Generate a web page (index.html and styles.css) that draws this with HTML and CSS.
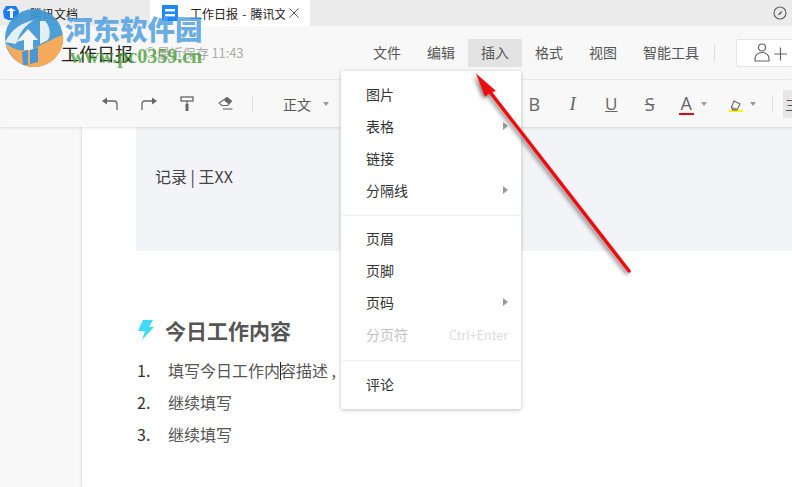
FILE: index.html
```html
<!DOCTYPE html>
<html lang="zh-CN">
<head>
    <meta charset="UTF-8">
    <title>工作日报 - 腾讯文档</title>
    <link rel="stylesheet" href="styles.css">
</head>
<body>
    <div class="tabs">
        <div class="tab">
            <svg class="tab-logo" width="16" height="14" viewBox="0 0 16 14"><path d="M3 0h10l3 5-1 7-4 2H5l-4-2-1-7z" fill="#1e7cf2"/><path d="M3 5l5-3 5 3h-3v7H7V5z" fill="#fff"/></svg>
            <span>腾讯文档</span>
        </div>
        <div class="tab tab-active">
            <svg class="tab-icon" width="16" height="16" viewBox="0 0 16 16"><rect width="16" height="16" rx="1" fill="#1e88f5"/><rect x="3" y="4" width="10" height="2.4" fill="#fff"/><rect x="3" y="9" width="10" height="2.4" fill="#fff"/></svg>
            <span class="tab-title">工作日报 - 腾讯文档</span>
            <svg class="tab-close" width="10" height="10" viewBox="0 0 10 10"><path d="M0.5 0.5l9 9M9.5 0.5l-9 9" stroke="#555" fill="none"/></svg>
        </div>
        <svg class="compass" width="14" height="14" viewBox="0 0 14 14"><circle cx="7" cy="7" r="6" stroke="#666" stroke-width="1.2" fill="none"/><path d="M9.5 4.5L6 7l-1.500 2.500L8 8z" fill="#666"/></svg>
    </div>

    <div class="header">
        <div class="doc-title">工作日报</div>
        <div class="save-state">
            <svg width="11" height="11" viewBox="0 0 11 11"><circle cx="5.500" cy="5.500" r="5" stroke="#aaa" fill="none"/></svg>
            最近保存 11:43
        </div>
        <nav class="menu-bar">
            <span class="menu-item">文件</span>
            <span class="menu-item">编辑</span>
            <span class="menu-item menu-item-open">插入</span>
            <span class="menu-item">格式</span>
            <span class="menu-item">视图</span>
            <span class="menu-item">智能工具</span>
        </nav>
        <div class="header-sep"></div>
        <div class="share">
            <svg width="38" height="22" viewBox="0 0 38 22"><circle cx="10" cy="5.500" r="3.500" stroke="#666" stroke-width="1.200" fill="none"/><path d="M3 19v-2.500c0-3 2.500-6 7-6s7 3 7 6V19z" stroke="#666" stroke-width="1.200" fill="none"/><path d="M22 12h13M28.500 5.500v13" stroke="#666" stroke-width="1.200" fill="none"/></svg>
        </div>
    </div>

    <div class="toolbar">
        <div class="tool">
            <svg width="16" height="14" viewBox="0 0 16 14"><path d="M0 4l5-3.500v7z" fill="#666"/><path d="M4 4h8a3 3 0 0 1 3 3v6" stroke="#666" stroke-width="1.300" fill="none"/></svg>
        </div>
        <div class="tool">
            <svg width="16" height="14" viewBox="0 0 16 14"><path d="M16 4l-5-3.500v7z" fill="#666"/><path d="M12 4H4a3 3 0 0 0-3 3v6" stroke="#666" stroke-width="1.300" fill="none"/></svg>
        </div>
        <div class="tool">
            <svg width="14" height="15" viewBox="0 0 14 15"><rect x="1" y="1" width="12" height="4" stroke="#666" stroke-width="1.300" fill="none"/><path d="M7 5v3" stroke="#666" stroke-width="1.300"/><rect x="5.500" y="8" width="3" height="7" fill="#666"/></svg>
        </div>
        <div class="tool">
            <svg width="15" height="13" viewBox="0 0 15 13"><path d="M9 0.500l4.500 3.500-4 4.500H4L1 6z" fill="#fff" stroke="#666" stroke-width="1.100"/><path d="M9 0.500l4.500 3.500-2.800 3.200-4.700-3.700z" fill="#666"/><path d="M5 12h9.500" stroke="#666" stroke-width="1.100"/></svg>
        </div>
        <div class="tool-sep"></div>
        <div class="style-select">正文<span class="caret"></span></div>

        <div class="format-group">
            <div class="tool tool-b">B</div>
            <div class="tool tool-i">I</div>
            <div class="tool tool-u">U</div>
            <div class="tool tool-s">S</div>
            <div class="tool tool-color">
                <span class="color-a">A</span><span class="caret"></span>
            </div>
            <div class="tool tool-color tool-mark">
                <span class="color-mark">
                    <svg width="14" height="14" viewBox="0 0 14 14"><path d="M5 1l6 3-3 6H3.500L2.500 7z" stroke="#666" stroke-width="1.100" fill="none"/><path d="M3 7l6 2-1 1H3.500z" fill="#888"/></svg>
                </span><span class="caret"></span>
            </div>
            <div class="tool-sep tool-sep-right"></div>
            <div class="tool-box">三</div>
        </div>
    </div>

    <div class="workspace">
        <div class="page">
            <div class="banner">记录 | 王XX</div>
            <h2 class="section-title">
                <svg width="16" height="20" viewBox="0 0 16 20"><path d="M5 0h10l-4 7h5L4 20l3-9H0z" fill="#3fdcf7"/></svg>
                今日工作内容
            </h2>
            <ol class="work-list">
                <li><span class="num">1.</span><span>填写今日工作内<i class="text-cursor"></i>容描述 ,</span></li>
                <li><span class="num">2.</span><span>继续填写</span></li>
                <li><span class="num">3.</span><span>继续填写</span></li>
            </ol>
        </div>
    </div>

    <div class="dropdown">
        <div class="dropdown-group">
            <div class="dropdown-item">图片</div>
            <div class="dropdown-item has-sub">表格</div>
            <div class="dropdown-item">链接</div>
            <div class="dropdown-item has-sub">分隔线</div>
        </div>
        <div class="dropdown-group dropdown-group-page">
            <div class="dropdown-item">页眉</div>
            <div class="dropdown-item">页脚</div>
            <div class="dropdown-item has-sub">页码</div>
            <div class="dropdown-item disabled">分页符<span class="shortcut">Ctrl+Enter</span></div>
        </div>
        <div class="dropdown-group">
            <div class="dropdown-item">评论</div>
        </div>
    </div>

    <!-- red arrow drawn on top of the screenshot -->
    <svg class="red-arrow" width="792" height="487" viewBox="0 0 792 487">
        <defs>
            <filter id="arrow-shadow" x="-20%" y="-20%" width="140%" height="140%">
                <feDropShadow dx="-2" dy="2" stdDeviation="2" flood-color="#000" flood-opacity="0.5"/>
            </filter>
        </defs>
        <g filter="url(#arrow-shadow)">
            <path d="M629 271L490 92" stroke="#ee0f0f" stroke-width="3.500" stroke-linecap="round"/>
            <path d="M476 73.500L496 91 490.500 92.500 485 97z" fill="#ee0f0f"/>
        </g>
    </svg>

    <!-- site watermark -->
    <div class="watermark">
        <svg class="wm-logo" width="60" height="58" viewBox="0 0 60 58">
            <circle cx="30" cy="29" r="29" fill="#3f97d4" opacity="0.92"/>
            <path d="M2 34c8 8 18 9 28 5 10-4 19-10 29-13 2 17-11 32-29 32C15 58 5 47 2 34z" fill="#f6ab5c"/>
            <path d="M1 33C8 20 17 14 30 11c-10 6-15 14-18 24z" fill="#f4f6f8" opacity="0.9"/>
            <path d="M12 33l12-13 10 11h-5v10h-9V31z" fill="#f4f6f8"/>
            <path d="M36 12h5c5 5 6 13 3 19l-8 4z" fill="#f4f6f8" opacity="0.9"/>
            <path d="M18 43l6-2v15h-5zM26 41l8-3v15l-8 2z" fill="#2e90e8" opacity="0.85"/>
        </svg>
        <div class="wm-name">河东软件园</div>
        <div class="wm-url">www.pc0359.cn</div>
    </div>
</body>
</html>
```

FILE: styles.css
```css
* {
    box-sizing: border-box;
}
html, body {
    height: 100%;
}
body {
    margin: 0;
    display: flex;
    flex-direction: column;
    overflow: hidden;
    font-family: "Noto Sans CJK SC", sans-serif;
    color: #333;
    background: #f8f8f9;
}

/* window tabs */
.tabs {
    height: 26px;
    flex: none;
    display: flex;
    align-items: center;
    background: #ebebeb;
    font-size: 12px;
    color: #222;
}
.tab {
    width: 150px;
    height: 26px;
    padding-left: 3px;
    display: flex;
    align-items: center;
}
.tab-logo {
    margin-right: 11px;
}
.tab-active {
    width: 160px;
    padding-left: 12px;
    background: #fff;
}
.tab-icon {
    margin-right: 12px;
}
.tab-title {
    width: 95px;
    flex: none;
    overflow: hidden;
    white-space: nowrap;
    word-spacing: 1.500px;
}
.tab-close {
    margin-left: 4px;
}
.compass {
    margin-left: auto;
    margin-right: 5px;
}

/* title + menu row */
.header {
    height: 54px;
    flex: none;
    display: flex;
    align-items: center;
    padding-left: 61px;
    background: #f8f8f8;
    border-bottom: 1px solid #ececec;
}
.doc-title {
    width: 84px;
    flex: none;
    font-size: 18px;
    color: #222;
}
.save-state {
    width: 215px;
    flex: none;
    display: flex;
    align-items: center;
    gap: 1px;
    font-size: 13px;
    letter-spacing: -0.100px;
    color: #aaa;
}
.menu-bar {
    flex: none;
    display: flex;
}
.menu-item {
    height: 28px;
    padding: 0 13px;
    font-size: 14px;
    line-height: 27px;
    white-space: nowrap;
    color: #555;
}
.menu-item-open {
    background: #e3e3e3;
}
.header-sep {
    width: 1px;
    height: 18px;
    flex: none;
    margin: 0 21px 0 2px;
    background: #e0e0e0;
}
.share {
    width: 80px;
    height: 28px;
    flex: none;
    padding: 2px 0 0 15px;
    background: #fff;
    border: 1px solid #e4e4e4;
    border-radius: 2px;
}

/* format toolbar */
.toolbar {
    height: 47px;
    flex: none;
    display: flex;
    align-items: center;
    padding-left: 91px;
    background: #f8f8f8;
    box-shadow: 0 1px 3px rgba(0, 0, 0, 0.12);
    position: relative;
    z-index: 1;
}
.tool {
    width: 38.5px;
    flex: none;
    display: flex;
    justify-content: center;
    align-items: center;
    color: #666;
    font-size: 16px;
}
.tool-sep {
    width: 1px;
    height: 14px;
    flex: none;
    margin: 0 30px 0 7px;
    background: #ddd;
}
.style-select {
    flex: none;
    display: flex;
    align-items: center;
    font-size: 14px;
    white-space: nowrap;
    color: #555;
}
.style-select .caret {
    margin-left: 12px;
}
.caret {
    width: 0;
    height: 0;
    border: 3px solid transparent;
    border-top: 4px solid #999;
    border-bottom: 0;
}
.format-group {
    flex: none;
    display: flex;
    align-items: center;
    margin-left: 186px;
}
.tool-b {
    font-family: "Open Sans", sans-serif;
    font-size: 18px;
}
.tool-i {
    font-family: "Liberation Serif", serif;
    font-style: italic;
    font-size: 19px;
}
.tool-u {
    font-family: "Open Sans", sans-serif;
    font-size: 17px;
    text-decoration: underline;
}
.tool-s {
    font-family: "Open Sans", sans-serif;
    font-size: 18px;
    text-decoration: line-through;
}
.tool-color {
    gap: 7px;
    padding-left: 9px;
}
.tool-mark {
    margin-left: 11px;
}
.color-a {
    width: 15px;
    font-family: "Open Sans", sans-serif;
    font-size: 18px;
    line-height: 20px;
    text-align: center;
    border-bottom: 2px solid #e60012;
}
.color-mark {
    width: 14px;
    height: 17px;
    display: block;
    border-bottom: 2px solid #fff200;
}
.tool-sep-right {
    margin: 0 10px 0 15px;
}
.tool-box {
    width: 20px;
    height: 28px;
    flex: none;
    padding-left: 2px;
    background: #e6e6e6;
    font-size: 14px;
    line-height: 28px;
    color: #555;
}

/* document */
.workspace {
    flex: 1;
    display: flex;
    padding-left: 82px;
    min-height: 0;
}
.page {
    flex: 1;
    padding-left: 54px;
    background: #fff;
    box-shadow: 0 0 3px rgba(0, 0, 0, 0.2);
}
.banner {
    height: 124px;
    padding: 37px 0 0 19px;
    background: #f2f4f8;
    font-size: 16px;
    line-height: 24px;
    color: #444;
}
.section-title {
    margin: 0;
    padding: 64px 0 0 2px;
    display: flex;
    align-items: center;
    gap: 11px;
    font-size: 21px;
    line-height: 30px;
    font-weight: bold;
    color: #555;
}
.work-list {
    margin: 9px 0 0;
    padding: 0 0 0 1px;
    list-style: none;
    font-size: 16px;
    line-height: 32px;
    color: #555;
}
.work-list li {
    display: flex;
    white-space: nowrap;
}
.num {
    width: 31px;
    color: #333;
}
.text-cursor {
    display: inline-block;
    width: 1px;
    height: 18px;
    margin-right: -1px;
    vertical-align: -3px;
    background: #222;
}

/* insert dropdown, hangs over the page */
.dropdown {
    position: absolute;
    left: 341px;
    top: 71px;
    width: 180px;
    z-index: 2;
    background: #fff;
    border-radius: 2px;
    box-shadow: 0 1px 4px rgba(0, 0, 0, 0.25);
}
.dropdown-group {
    padding: 8px 0;
    border-bottom: 1px solid #f0f0f0;
}
.dropdown-group:last-child {
    border-bottom: 0;
}
.dropdown-group-page {
    padding: 7px 0 9px;
}
.dropdown-item {
    height: 32px;
    padding: 0 13px 2px 25px;
    position: relative;
    display: flex;
    justify-content: space-between;
    align-items: center;
    font-size: 14px;
    color: #333;
}
.has-sub::after {
    content: "";
    position: absolute;
    right: 13px;
    top: 11px;
    border: 4px solid transparent;
    border-left: 5px solid #999;
    border-right: 0;
}
.disabled {
    color: #c4c4c4;
}
.shortcut {
    font-size: 12.500px;
    color: #dcdcdc;
}

.red-arrow {
    position: absolute;
    left: 0;
    top: 0;
    z-index: 3;
}

/* watermark */
.watermark {
    position: absolute;
    left: 0;
    top: 0;
    width: 210px;
    height: 70px;
    z-index: 4;
}
.wm-logo {
    position: absolute;
    left: 4px;
    top: 9px;
}
.wm-name {
    position: absolute;
    left: 65px;
    top: 9px;
    font-size: 27.500px;
    line-height: 38px;
    font-weight: 900;
    white-space: nowrap;
    color: rgba(80, 160, 225, 0.85);
}
.wm-url {
    position: absolute;
    left: 70px;
    top: 45px;
    font-family: "Liberation Serif", serif;
    font-size: 20px;
    line-height: 22px;
    font-weight: bold;
    white-space: nowrap;
    color: rgba(70, 160, 50, 0.8);
}
```
